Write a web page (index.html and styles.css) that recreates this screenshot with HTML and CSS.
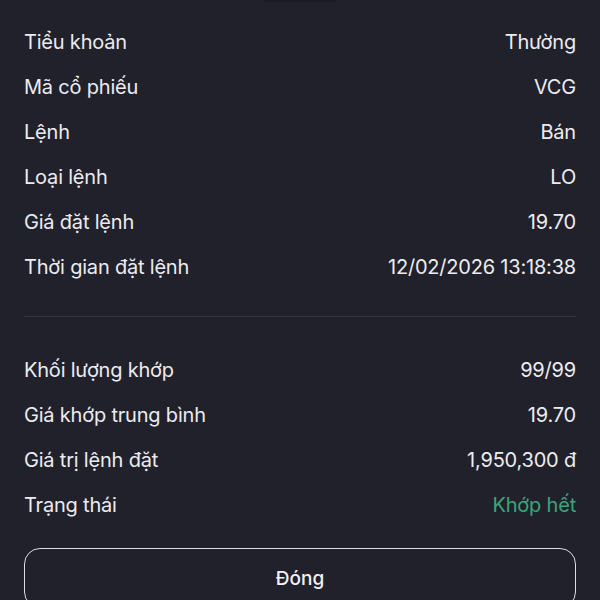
FILE: index.html
```html
<!DOCTYPE html>
<html lang="vi">
<head>
<meta charset="utf-8">
<link rel="stylesheet" href="styles.css">
</head>
<body>
<div class="sheet">
  <div class="handle"></div>
  <div class="section first">
    <div class="row"><span class="label">Tiểu khoản</span><span class="value">Thường</span></div>
    <div class="row"><span class="label">Mã cổ phiếu</span><span class="value">VCG</span></div>
    <div class="row"><span class="label">Lệnh</span><span class="value">Bán</span></div>
    <div class="row"><span class="label">Loại lệnh</span><span class="value">LO</span></div>
    <div class="row"><span class="label">Giá đặt lệnh</span><span class="value">19.70</span></div>
    <div class="row"><span class="label">Thời gian đặt lệnh</span><span class="value">12/02/2026 13:18:38</span></div>
  </div>
  <div class="divider"></div>
  <div class="section">
    <div class="row"><span class="label">Khối lượng khớp</span><span class="value">99/99</span></div>
    <div class="row"><span class="label">Giá khớp trung bình</span><span class="value">19.70</span></div>
    <div class="row"><span class="label">Giá trị lệnh đặt</span><span class="value">1,950,300 đ</span></div>
    <div class="row"><span class="label">Trạng thái</span><span class="value success">Khớp hết</span></div>
  </div>
  <button class="close-btn">Đóng</button>
</div>
</body>
</html>
```
FILE: styles.css
```css
html, body {
  margin: 0;
  padding: 0;
  background: #21212b;
}
body {
  font-family: Inter, "Noto Sans", sans-serif;
  color: #ececf0;
  height: 600px;
  overflow: hidden;
}
.sheet {
  display: flex;
  flex-direction: column;
  padding: 0 24px;
}
.handle {
  align-self: center;
  width: 72px;
  height: 2px;
  background: #191920;
}
.section.first {
  padding-top: 17.5px;
}
.row {
  display: flex;
  justify-content: space-between;
  align-items: center;
  height: 45px;
  font-size: 20px;
  letter-spacing: -0.2px;
}
.success {
  color: #3aa57a;
}
.divider {
  height: 1px;
  background: #34343f;
  margin: 26px 0 31px;
}
.close-btn {
  margin-top: 20.5px;
  height: 60px;
  border: 1.5px solid #dcdce2;
  border-radius: 16px;
  background: transparent;
  color: #f2f2f5;
  font-family: Inter, "Noto Sans", sans-serif;
  font-size: 19px;
  font-weight: 500;
}
```
